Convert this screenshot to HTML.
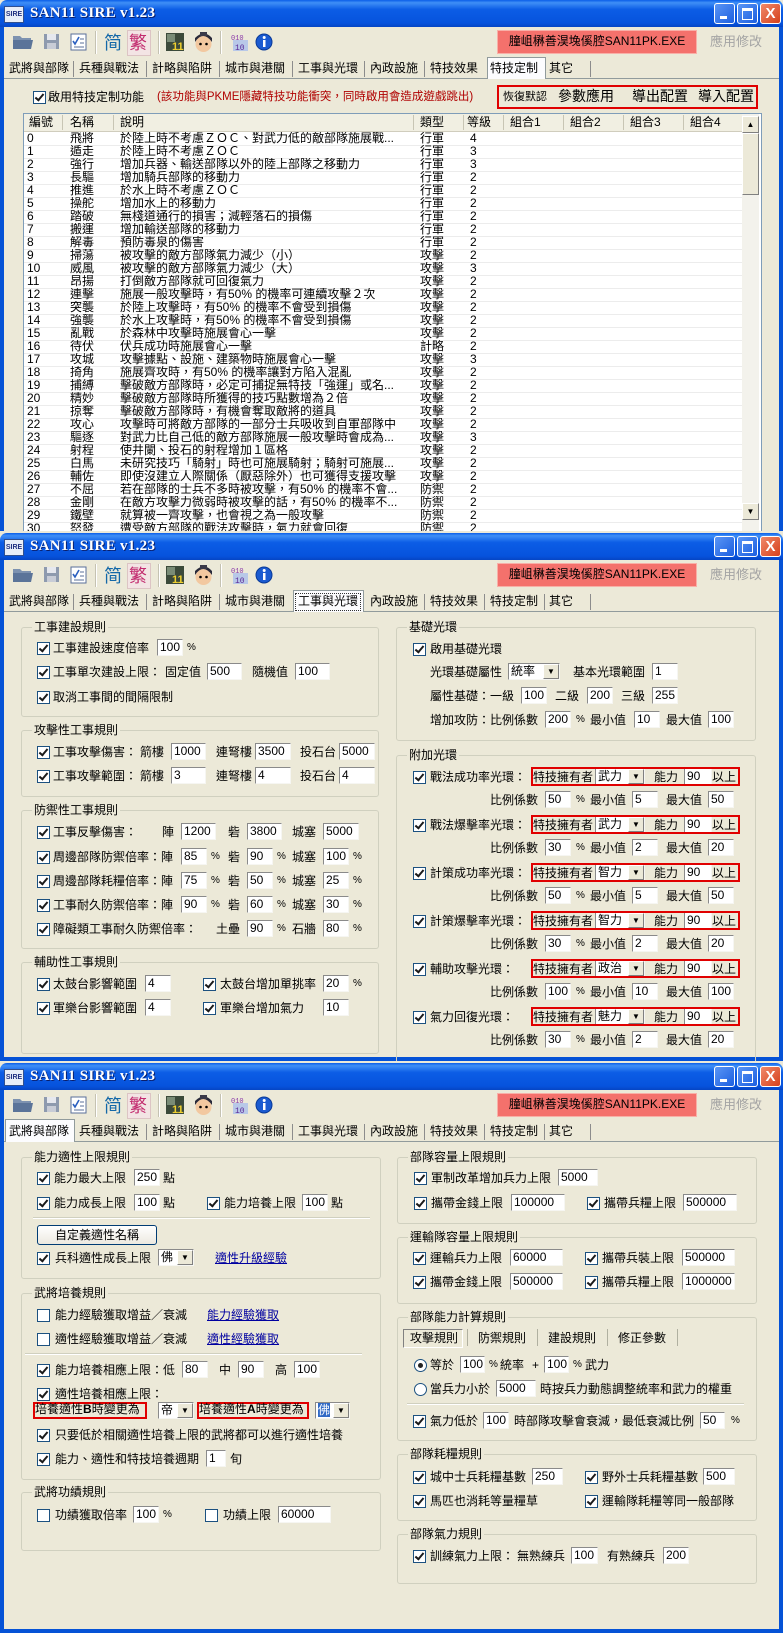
<!DOCTYPE html>
<html><head><meta charset="utf-8"><style>
body{margin:0;width:783px;height:1633px;position:relative;overflow:hidden;background:#ece9d8;font:12px "Liberation Sans","Noto Sans CJK TC",sans-serif;color:#000}
.a{position:absolute}
.w{position:absolute;left:0;width:783px;background:#ece9d8;overflow:hidden}
.t{position:absolute;white-space:nowrap;line-height:16px;height:16px}
.tb{position:absolute;left:0;top:0;width:783px;height:27px;border-radius:7px 7px 0 0;background:linear-gradient(#0a5ee8,#3f8ff6 10%,#0c5de6 35%,#0653dd 85%,#0545c4)}
.tt{position:absolute;left:30px;top:5px;color:#fff;font:bold 15px "Liberation Serif",serif;letter-spacing:0.3px;text-shadow:1px 1px #0a1e6a}
.ico{position:absolute;left:4px;top:6px;width:18px;height:15px;background:#e8eef8;border:1px solid #305090;font:bold 7px "Liberation Sans",sans-serif;color:#203080;line-height:15px;text-align:center}
.bt{position:absolute;top:3px;width:19px;height:19px;border:1px solid #fff;border-radius:3px;background:linear-gradient(135deg,#5a95f5,#1c5fe0)}
.sd{position:absolute;top:27px;width:4px;background:#0552d6}
.sep{position:absolute;top:31px;width:1px;height:23px;background:#c5c2b2;border-right:1px solid #fff}
.tab{position:absolute;top:60px;height:17px;line-height:17px;white-space:nowrap}
.ts{position:absolute;top:61px;width:1px;height:16px;background:#8c8c8c}
.cb{position:absolute;width:11px;height:11px;border:1px solid #1c5180;background:#fff}
.cb.on::after{content:"";position:absolute;left:3px;top:0;width:3px;height:7px;border:solid #1a1a1a;border-width:0 2px 2px 0;transform:rotate(40deg)}
.in{position:absolute;height:15px;background:#fff;border:1px solid;border-color:#8a8a8a #f6f6f2 #f6f6f2 #8a8a8a;line-height:15px;padding-left:2px;white-space:nowrap;overflow:hidden}
.sb{position:absolute;right:0;top:0;width:14px;height:13px;background:#ece9d8;border:1px solid;border-color:#fff #808080 #808080 #fff;font-size:8px;line-height:13px;text-align:center;font-style:normal}
.gb{position:absolute;border:1px solid #d0d0bf;border-radius:3px}
.gt{position:absolute;top:-9px;left:10px;background:#ece9d8;padding:0 2px;line-height:16px;white-space:nowrap}
.rb{position:absolute;border:2px solid #e00000}
.hr{position:absolute;height:1px;background:#d0d0bf;border-bottom:1px solid #fff}
.lk{color:#0000a0;text-decoration:underline}
.rd{position:absolute;width:11px;height:11px;border:1px solid #1c5180;border-radius:50%;background:#fff}
.row{position:absolute;left:24px;width:718px;height:13px;line-height:13px;border-bottom:1px solid #ececec;white-space:nowrap}
.row span{position:absolute;top:0;overflow:hidden}
</style></head><body>

<!-- ================= WINDOW 1 ================= -->
<div class="w" style="top:0;height:531px">
<div class="tb"><div class="ico">SIRE</div><div class="tt">SAN11 SIRE v1.23</div>
<div class="bt" style="left:714px"><div class="a" style="left:5px;top:12px;width:7px;height:3px;background:#fff"></div></div>
<div class="bt" style="left:737px"><div class="a" style="left:4px;top:4px;width:9px;height:8px;border:1px solid #fff;border-top-width:3px"></div></div>
<div class="bt" style="left:760px;background:linear-gradient(135deg,#f08a6a,#d5401c);color:#fff;font:bold 15px 'Liberation Sans';text-align:center;line-height:19px">X</div></div>
<div class="sd" style="left:0;height:504px"></div><div class="sd" style="left:779px;height:504px"></div>
<svg class="a" style="left:12px;top:33px" width="22" height="18"><path d="M1 3h7l2 2h9v11H1z" fill="#7d92b0"/><path d="M1 7h20l-2 9H1z" fill="#5b7499"/></svg>
<svg class="a" style="left:43px;top:33px" width="17" height="17"><rect x="1" y="1" width="15" height="15" fill="#8e9aae"/><rect x="4" y="1" width="9" height="6" fill="#e6e8ee"/><rect x="4" y="10" width="9" height="6" fill="#c8ccd6"/></svg>
<svg class="a" style="left:70px;top:33px" width="17" height="18"><rect x="1" y="1" width="15" height="16" fill="#fff" stroke="#5a6f9a"/><path d="M3 8l2 3 4-7" stroke="#2a5fc0" stroke-width="1.6" fill="none"/><path d="M10 6h4M10 10h4M4 14h10" stroke="#5a6f9a"/></svg>
<div class="sep" style="left:95px"></div>
<div class="t" style="left:104px;top:33px;font-size:18px;line-height:20px;height:20px;color:#1468a8">简</div>
<div class="a" style="left:127px;top:30px;width:22px;height:24px;background:#f3e4e4;border:1px solid #dcc4c4"></div>
<div class="t" style="left:129px;top:33px;font-size:18px;line-height:20px;height:20px;color:#c22a6e">繁</div>
<div class="sep" style="left:158px"></div>
<svg class="a" style="left:166px;top:33px" width="18" height="18"><rect width="18" height="18" fill="#3c4a3a"/><rect x="1" y="1" width="8" height="8" fill="#7a8c76"/><text x="6" y="17" font-size="11" font-weight="bold" fill="#f0d030" font-family="Liberation Sans">11</text></svg>
<svg class="a" style="left:193px;top:31px" width="21" height="22"><circle cx="10.5" cy="13" r="8" fill="#f2c8a0"/><path d="M2 11q8-12 17 0v-4q-8-9-17 0z" fill="#2a2a3a"/><rect x="7" y="1" width="7" height="4" fill="#3a3a4a"/><circle cx="7.5" cy="13" r="1.3"/><circle cx="13.5" cy="13" r="1.3"/></svg>
<div class="sep" style="left:220px"></div>
<svg class="a" style="left:230px;top:32px" width="19" height="20"><rect x="3" y="8" width="15" height="11" fill="#b8c8e8"/><text x="1" y="8" font-size="7" fill="#8a3aa8" font-family="Liberation Mono">010</text><text x="5" y="18" font-size="8" fill="#5a2a98" font-family="Liberation Mono">10</text></svg>
<svg class="a" style="left:255px;top:33px" width="18" height="18"><circle cx="9" cy="9" r="8" fill="#1a5ad0" stroke="#0a3a98"/><rect x="8" y="7" width="2.5" height="7" fill="#fff"/><circle cx="9.2" cy="4.5" r="1.5" fill="#fff"/></svg>
<div class="a" style="left:497px;top:30px;width:198px;height:22px;background:#f4716c;border:1px solid #f8b0a8"></div>
<div class="t" style="left:497px;top:33px;width:200px;text-align:center">膧岨楙善淏堍傒腔SAN11PK.EXE</div>
<div class="t" style="left:710px;top:34px;color:#a4a4a4;font-size:13px">應用修改</div>
<div class="a" style="left:4px;top:78px;width:775px;height:1px;background:#919b9c"></div>
<div class="a" style="left:487px;top:57px;width:57px;height:21px;background:#fcfcfe;border:1px solid #919b9c;border-bottom:none"></div>
<div class="tab" style="left:9px">武將與部隊</div><div class="ts" style="left:73px"></div>
<div class="tab" style="left:79px">兵種與戰法</div><div class="ts" style="left:146px"></div>
<div class="tab" style="left:152px">計略與陷阱</div><div class="ts" style="left:219px"></div>
<div class="tab" style="left:225px">城市與港關</div><div class="ts" style="left:292px"></div>
<div class="tab" style="left:298px">工事與光環</div><div class="ts" style="left:364px"></div>
<div class="tab" style="left:370px">內政設施</div><div class="ts" style="left:424px"></div>
<div class="tab" style="left:430px">特技效果</div>
<div class="tab" style="left:490px">特技定制</div>
<div class="tab" style="left:549px">其它</div><div class="ts" style="left:590px"></div>
<div class="cb on" style="left:33px;top:91px"></div>
<div class="t" style="left:48px;top:89px">啟用特技定制功能</div>
<div class="t" style="left:157px;top:89px;color:#b00000;font-size:11.5px">(該功能與PKME隱藏特技功能衝突，同時啟用會造成遊戲跳出)</div>
<div class="rb" style="left:497px;top:85px;width:257px;height:20px"></div>
<div class="t" style="left:503px;top:89px;font-size:11px">恢復默認</div>
<div class="t" style="left:558px;top:87px;font-size:14px;line-height:18px">參數應用</div>
<div class="t" style="left:632px;top:87px;font-size:14px;line-height:18px">導出配置</div>
<div class="t" style="left:698px;top:87px;font-size:14px;line-height:18px">導入配置</div>
<div class="a" style="left:23px;top:113px;width:737px;height:420px;background:#fff;border:1px solid #7f9db9"></div>
<div class="a" style="left:24px;top:114px;width:718px;height:17px;background:#f1efe2;border-bottom:1px solid #d0cdbd"></div>
<div class="t" style="left:29px;top:114px">編號</div><div class="a" style="left:62px;top:115px;width:1px;height:15px;background:#c8c5b4"></div>
<div class="t" style="left:70px;top:114px">名稱</div><div class="a" style="left:113px;top:115px;width:1px;height:15px;background:#c8c5b4"></div>
<div class="t" style="left:120px;top:114px">說明</div><div class="a" style="left:413px;top:115px;width:1px;height:15px;background:#c8c5b4"></div>
<div class="t" style="left:420px;top:114px">類型</div><div class="a" style="left:463px;top:115px;width:1px;height:15px;background:#c8c5b4"></div>
<div class="t" style="left:467px;top:114px">等級</div><div class="a" style="left:503px;top:115px;width:1px;height:15px;background:#c8c5b4"></div>
<div class="t" style="left:510px;top:114px">組合1</div><div class="a" style="left:563px;top:115px;width:1px;height:15px;background:#c8c5b4"></div>
<div class="t" style="left:570px;top:114px">組合2</div><div class="a" style="left:623px;top:115px;width:1px;height:15px;background:#c8c5b4"></div>
<div class="t" style="left:630px;top:114px">組合3</div><div class="a" style="left:683px;top:115px;width:1px;height:15px;background:#c8c5b4"></div>
<div class="t" style="left:690px;top:114px">組合4</div>
<div class="a" style="left:742px;top:114px;width:17px;height:420px;background:#f3f2ec"></div>
<div class="a" style="left:742px;top:116px;width:15px;height:15px;background:#ece9d8;border:1px solid #fff;border-right-color:#808080;border-bottom-color:#808080;font-size:8px;text-align:center;line-height:15px">▲</div>
<div class="a" style="left:742px;top:503px;width:15px;height:15px;background:#ece9d8;border:1px solid #fff;border-right-color:#808080;border-bottom-color:#808080;font-size:8px;text-align:center;line-height:15px">▼</div>
<div class="a" style="left:742px;top:133px;width:15px;height:60px;background:#ece9d8;border:1px solid #fff;border-right-color:#808080;border-bottom-color:#808080"></div>
<div class="a" style="left:24px;top:131px;width:718px;height:402px;overflow:hidden">
<div style="position:relative;left:-24px">
<div class="row" style="top:1px"><span style="left:3px">0</span><span style="left:46px">飛將</span><span style="left:96px;width:292px">於陸上時不考慮ＺＯＣ、對武力低的敵部隊施展戰...</span><span style="left:396px">行軍</span><span style="left:446px">4</span></div>
<div class="row" style="top:14px"><span style="left:3px">1</span><span style="left:46px">遁走</span><span style="left:96px">於陸上時不考慮ＺＯＣ</span><span style="left:396px">行軍</span><span style="left:446px">3</span></div>
<div class="row" style="top:27px"><span style="left:3px">2</span><span style="left:46px">強行</span><span style="left:96px">增加兵器、輸送部隊以外的陸上部隊之移動力</span><span style="left:396px">行軍</span><span style="left:446px">3</span></div>
<div class="row" style="top:40px"><span style="left:3px">3</span><span style="left:46px">長驅</span><span style="left:96px">增加騎兵部隊的移動力</span><span style="left:396px">行軍</span><span style="left:446px">2</span></div>
<div class="row" style="top:53px"><span style="left:3px">4</span><span style="left:46px">推進</span><span style="left:96px">於水上時不考慮ＺＯＣ</span><span style="left:396px">行軍</span><span style="left:446px">2</span></div>
<div class="row" style="top:66px"><span style="left:3px">5</span><span style="left:46px">操舵</span><span style="left:96px">增加水上的移動力</span><span style="left:396px">行軍</span><span style="left:446px">2</span></div>
<div class="row" style="top:79px"><span style="left:3px">6</span><span style="left:46px">踏破</span><span style="left:96px">無棧道通行的損害；減輕落石的損傷</span><span style="left:396px">行軍</span><span style="left:446px">2</span></div>
<div class="row" style="top:92px"><span style="left:3px">7</span><span style="left:46px">搬運</span><span style="left:96px">增加輸送部隊的移動力</span><span style="left:396px">行軍</span><span style="left:446px">2</span></div>
<div class="row" style="top:105px"><span style="left:3px">8</span><span style="left:46px">解毒</span><span style="left:96px">預防毒泉的傷害</span><span style="left:396px">行軍</span><span style="left:446px">2</span></div>
<div class="row" style="top:118px"><span style="left:3px">9</span><span style="left:46px">掃蕩</span><span style="left:96px">被攻擊的敵方部隊氣力減少（小）</span><span style="left:396px">攻擊</span><span style="left:446px">2</span></div>
<div class="row" style="top:131px"><span style="left:3px">10</span><span style="left:46px">威風</span><span style="left:96px">被攻擊的敵方部隊氣力減少（大）</span><span style="left:396px">攻擊</span><span style="left:446px">3</span></div>
<div class="row" style="top:144px"><span style="left:3px">11</span><span style="left:46px">昂揚</span><span style="left:96px">打倒敵方部隊就可回復氣力</span><span style="left:396px">攻擊</span><span style="left:446px">2</span></div>
<div class="row" style="top:157px"><span style="left:3px">12</span><span style="left:46px">連擊</span><span style="left:96px">施展一般攻擊時，有50% 的機率可連續攻擊２次</span><span style="left:396px">攻擊</span><span style="left:446px">2</span></div>
<div class="row" style="top:170px"><span style="left:3px">13</span><span style="left:46px">突襲</span><span style="left:96px">於陸上攻擊時，有50% 的機率不會受到損傷</span><span style="left:396px">攻擊</span><span style="left:446px">2</span></div>
<div class="row" style="top:183px"><span style="left:3px">14</span><span style="left:46px">強襲</span><span style="left:96px">於水上攻擊時，有50% 的機率不會受到損傷</span><span style="left:396px">攻擊</span><span style="left:446px">2</span></div>
<div class="row" style="top:196px"><span style="left:3px">15</span><span style="left:46px">亂戰</span><span style="left:96px">於森林中攻擊時施展會心一擊</span><span style="left:396px">攻擊</span><span style="left:446px">2</span></div>
<div class="row" style="top:209px"><span style="left:3px">16</span><span style="left:46px">待伏</span><span style="left:96px">伏兵成功時施展會心一擊</span><span style="left:396px">計略</span><span style="left:446px">2</span></div>
<div class="row" style="top:222px"><span style="left:3px">17</span><span style="left:46px">攻城</span><span style="left:96px">攻擊據點、設施、建築物時施展會心一擊</span><span style="left:396px">攻擊</span><span style="left:446px">3</span></div>
<div class="row" style="top:235px"><span style="left:3px">18</span><span style="left:46px">掎角</span><span style="left:96px">施展齊攻時，有50% 的機率讓對方陷入混亂</span><span style="left:396px">攻擊</span><span style="left:446px">2</span></div>
<div class="row" style="top:248px"><span style="left:3px">19</span><span style="left:46px">捕縛</span><span style="left:96px;width:292px">擊破敵方部隊時，必定可捕捉無特技「強運」或名...</span><span style="left:396px">攻擊</span><span style="left:446px">2</span></div>
<div class="row" style="top:261px"><span style="left:3px">20</span><span style="left:46px">精妙</span><span style="left:96px">擊破敵方部隊時所獲得的技巧點數增為２倍</span><span style="left:396px">攻擊</span><span style="left:446px">2</span></div>
<div class="row" style="top:274px"><span style="left:3px">21</span><span style="left:46px">掠奪</span><span style="left:96px">擊破敵方部隊時，有機會奪取敵將的道具</span><span style="left:396px">攻擊</span><span style="left:446px">2</span></div>
<div class="row" style="top:287px"><span style="left:3px">22</span><span style="left:46px">攻心</span><span style="left:96px">攻擊時可將敵方部隊的一部分士兵吸收到自軍部隊中</span><span style="left:396px">攻擊</span><span style="left:446px">2</span></div>
<div class="row" style="top:300px"><span style="left:3px">23</span><span style="left:46px">驅逐</span><span style="left:96px;width:292px">對武力比自己低的敵方部隊施展一般攻擊時會成為...</span><span style="left:396px">攻擊</span><span style="left:446px">3</span></div>
<div class="row" style="top:313px"><span style="left:3px">24</span><span style="left:46px">射程</span><span style="left:96px">使井闌、投石的射程增加１區格</span><span style="left:396px">攻擊</span><span style="left:446px">2</span></div>
<div class="row" style="top:326px"><span style="left:3px">25</span><span style="left:46px">白馬</span><span style="left:96px;width:292px">未研究技巧「騎射」時也可施展騎射；騎射可施展...</span><span style="left:396px">攻擊</span><span style="left:446px">2</span></div>
<div class="row" style="top:339px"><span style="left:3px">26</span><span style="left:46px">輔佐</span><span style="left:96px">即使沒建立人際關係（厭惡除外）也可獲得支援攻擊</span><span style="left:396px">攻擊</span><span style="left:446px">2</span></div>
<div class="row" style="top:352px"><span style="left:3px">27</span><span style="left:46px">不屈</span><span style="left:96px;width:292px">若在部隊的士兵不多時被攻擊，有50% 的機率不會...</span><span style="left:396px">防禦</span><span style="left:446px">2</span></div>
<div class="row" style="top:365px"><span style="left:3px">28</span><span style="left:46px">金剛</span><span style="left:96px;width:292px">在敵方攻擊力微弱時被攻擊的話，有50% 的機率不...</span><span style="left:396px">防禦</span><span style="left:446px">2</span></div>
<div class="row" style="top:378px"><span style="left:3px">29</span><span style="left:46px">鐵壁</span><span style="left:96px">就算被一齊攻擊，也會視之為一般攻擊</span><span style="left:396px">防禦</span><span style="left:446px">2</span></div>
<div class="row" style="top:391px"><span style="left:3px">30</span><span style="left:46px">怒發</span><span style="left:96px">遭受敵方部隊的戰法攻擊時，氣力就會回復</span><span style="left:396px">防禦</span><span style="left:446px">2</span></div>
</div></div>
</div>

<!-- ================= WINDOW 2 ================= -->
<div class="w" style="top:533px;height:528px">
<div class="tb"><div class="ico">SIRE</div><div class="tt">SAN11 SIRE v1.23</div>
<div class="bt" style="left:714px"><div class="a" style="left:5px;top:12px;width:7px;height:3px;background:#fff"></div></div>
<div class="bt" style="left:737px"><div class="a" style="left:4px;top:4px;width:9px;height:8px;border:1px solid #fff;border-top-width:3px"></div></div>
<div class="bt" style="left:760px;background:linear-gradient(135deg,#f08a6a,#d5401c);color:#fff;font:bold 15px 'Liberation Sans';text-align:center;line-height:19px">X</div></div>
<div class="sd" style="left:0;height:501px"></div><div class="sd" style="left:779px;height:501px"></div>
<div class="a" style="left:0;top:524px;width:783px;height:4px;background:#0552d6"></div>
<svg class="a" style="left:12px;top:33px" width="22" height="18"><path d="M1 3h7l2 2h9v11H1z" fill="#7d92b0"/><path d="M1 7h20l-2 9H1z" fill="#5b7499"/></svg>
<svg class="a" style="left:43px;top:33px" width="17" height="17"><rect x="1" y="1" width="15" height="15" fill="#8e9aae"/><rect x="4" y="1" width="9" height="6" fill="#e6e8ee"/><rect x="4" y="10" width="9" height="6" fill="#c8ccd6"/></svg>
<svg class="a" style="left:70px;top:33px" width="17" height="18"><rect x="1" y="1" width="15" height="16" fill="#fff" stroke="#5a6f9a"/><path d="M3 8l2 3 4-7" stroke="#2a5fc0" stroke-width="1.6" fill="none"/><path d="M10 6h4M10 10h4M4 14h10" stroke="#5a6f9a"/></svg>
<div class="sep" style="left:95px"></div>
<div class="t" style="left:104px;top:33px;font-size:18px;line-height:20px;height:20px;color:#1468a8">简</div>
<div class="a" style="left:127px;top:30px;width:22px;height:24px;background:#f3e4e4;border:1px solid #dcc4c4"></div>
<div class="t" style="left:129px;top:33px;font-size:18px;line-height:20px;height:20px;color:#c22a6e">繁</div>
<div class="sep" style="left:158px"></div>
<svg class="a" style="left:166px;top:33px" width="18" height="18"><rect width="18" height="18" fill="#3c4a3a"/><rect x="1" y="1" width="8" height="8" fill="#7a8c76"/><text x="6" y="17" font-size="11" font-weight="bold" fill="#f0d030" font-family="Liberation Sans">11</text></svg>
<svg class="a" style="left:193px;top:31px" width="21" height="22"><circle cx="10.5" cy="13" r="8" fill="#f2c8a0"/><path d="M2 11q8-12 17 0v-4q-8-9-17 0z" fill="#2a2a3a"/><rect x="7" y="1" width="7" height="4" fill="#3a3a4a"/><circle cx="7.5" cy="13" r="1.3"/><circle cx="13.5" cy="13" r="1.3"/></svg>
<div class="sep" style="left:220px"></div>
<svg class="a" style="left:230px;top:32px" width="19" height="20"><rect x="3" y="8" width="15" height="11" fill="#b8c8e8"/><text x="1" y="8" font-size="7" fill="#8a3aa8" font-family="Liberation Mono">010</text><text x="5" y="18" font-size="8" fill="#5a2a98" font-family="Liberation Mono">10</text></svg>
<svg class="a" style="left:255px;top:33px" width="18" height="18"><circle cx="9" cy="9" r="8" fill="#1a5ad0" stroke="#0a3a98"/><rect x="8" y="7" width="2.5" height="7" fill="#fff"/><circle cx="9.2" cy="4.5" r="1.5" fill="#fff"/></svg>
<div class="a" style="left:497px;top:30px;width:198px;height:22px;background:#f4716c;border:1px solid #f8b0a8"></div>
<div class="t" style="left:497px;top:33px;width:200px;text-align:center">膧岨楙善淏堍傒腔SAN11PK.EXE</div>
<div class="t" style="left:710px;top:34px;color:#a4a4a4;font-size:13px">應用修改</div>
<div class="a" style="left:4px;top:78px;width:775px;height:1px;background:#919b9c"></div>
<div class="a" style="left:293px;top:57px;width:69px;height:21px;background:#fcfcfe;border:1px solid #919b9c;border-bottom:none"></div>
<div class="a" style="left:295px;top:60px;width:64px;height:16px;border:1px dotted #333"></div>
<div class="tab" style="left:9px">武將與部隊</div><div class="ts" style="left:73px"></div>
<div class="tab" style="left:79px">兵種與戰法</div><div class="ts" style="left:146px"></div>
<div class="tab" style="left:152px">計略與陷阱</div><div class="ts" style="left:219px"></div>
<div class="tab" style="left:225px">城市與港關</div>
<div class="tab" style="left:298px">工事與光環</div>
<div class="tab" style="left:370px">內政設施</div><div class="ts" style="left:424px"></div>
<div class="tab" style="left:430px">特技效果</div><div class="ts" style="left:484px"></div>
<div class="tab" style="left:490px">特技定制</div><div class="ts" style="left:544px"></div>
<div class="tab" style="left:549px">其它</div><div class="ts" style="left:590px"></div>

<div class="gb" style="left:21px;top:94px;width:356px;height:88px"><div class="gt">工事建設規則</div></div>
<div class="cb on" style="left:37px;top:109px"></div><div class="t" style="left:53px;top:107px">工事建設速度倍率</div><div class="in" style="left:157px;top:106px;width:22px">100</div><div class="t" style="left:187px;top:107px;font-size:10px">%</div>
<div class="cb on" style="left:37px;top:133px"></div><div class="t" style="left:53px;top:131px">工事單次建設上限：</div><div class="t" style="left:165px;top:131px">固定值</div><div class="in" style="left:207px;top:130px;width:31px">500</div><div class="t" style="left:252px;top:131px">隨機值</div><div class="in" style="left:295px;top:130px;width:31px">100</div>
<div class="cb on" style="left:37px;top:158px"></div><div class="t" style="left:53px;top:156px">取消工事間的間隔限制</div>

<div class="gb" style="left:21px;top:197px;width:356px;height:65px"><div class="gt">攻擊性工事規則</div></div>
<div class="cb on" style="left:37px;top:213px"></div><div class="t" style="left:53px;top:211px">工事攻擊傷害：</div><div class="t" style="left:140px;top:211px">箭樓</div><div class="in" style="left:171px;top:210px;width:31px">1000</div><div class="t" style="left:216px;top:211px">連弩樓</div><div class="in" style="left:255px;top:210px;width:32px">3500</div><div class="t" style="left:300px;top:211px">投石台</div><div class="in" style="left:339px;top:210px;width:32px">5000</div>
<div class="cb on" style="left:37px;top:237px"></div><div class="t" style="left:53px;top:235px">工事攻擊範圍：</div><div class="t" style="left:140px;top:235px">箭樓</div><div class="in" style="left:171px;top:234px;width:31px">3</div><div class="t" style="left:216px;top:235px">連弩樓</div><div class="in" style="left:255px;top:234px;width:32px">4</div><div class="t" style="left:300px;top:235px">投石台</div><div class="in" style="left:339px;top:234px;width:32px">4</div>

<div class="gb" style="left:21px;top:277px;width:356px;height:137px"><div class="gt">防禦性工事規則</div></div>
<div class="cb on" style="left:37px;top:293px"></div><div class="t" style="left:53px;top:291px">工事反擊傷害：</div><div class="t" style="left:162px;top:291px">陣</div><div class="in" style="left:181px;top:290px;width:31px">1200</div><div class="t" style="left:228px;top:291px">砦</div><div class="in" style="left:247px;top:290px;width:31px">3800</div><div class="t" style="left:292px;top:291px">城塞</div><div class="in" style="left:323px;top:290px;width:32px">5000</div>
<div class="cb on" style="left:37px;top:318px"></div><div class="t" style="left:53px;top:316px">周邊部隊防禦倍率：陣</div><div class="in" style="left:181px;top:315px;width:22px">85</div><div class="t" style="left:211px;top:316px;font-size:10px">%</div><div class="t" style="left:228px;top:316px">砦</div><div class="in" style="left:247px;top:315px;width:22px">90</div><div class="t" style="left:277px;top:316px;font-size:10px">%</div><div class="t" style="left:292px;top:316px">城塞</div><div class="in" style="left:323px;top:315px;width:22px">100</div><div class="t" style="left:353px;top:316px;font-size:10px">%</div>
<div class="cb on" style="left:37px;top:342px"></div><div class="t" style="left:53px;top:340px">周邊部隊耗糧倍率：陣</div><div class="in" style="left:181px;top:339px;width:22px">75</div><div class="t" style="left:211px;top:340px;font-size:10px">%</div><div class="t" style="left:228px;top:340px">砦</div><div class="in" style="left:247px;top:339px;width:22px">50</div><div class="t" style="left:277px;top:340px;font-size:10px">%</div><div class="t" style="left:292px;top:340px">城塞</div><div class="in" style="left:323px;top:339px;width:22px">25</div><div class="t" style="left:353px;top:340px;font-size:10px">%</div>
<div class="cb on" style="left:37px;top:366px"></div><div class="t" style="left:53px;top:364px">工事耐久防禦倍率：陣</div><div class="in" style="left:181px;top:363px;width:22px">90</div><div class="t" style="left:211px;top:364px;font-size:10px">%</div><div class="t" style="left:228px;top:364px">砦</div><div class="in" style="left:247px;top:363px;width:22px">60</div><div class="t" style="left:277px;top:364px;font-size:10px">%</div><div class="t" style="left:292px;top:364px">城塞</div><div class="in" style="left:323px;top:363px;width:22px">30</div><div class="t" style="left:353px;top:364px;font-size:10px">%</div>
<div class="cb on" style="left:37px;top:390px"></div><div class="t" style="left:53px;top:388px">障礙類工事耐久防禦倍率：</div><div class="t" style="left:216px;top:388px">土壘</div><div class="in" style="left:247px;top:387px;width:22px">90</div><div class="t" style="left:277px;top:388px;font-size:10px">%</div><div class="t" style="left:292px;top:388px">石牆</div><div class="in" style="left:323px;top:387px;width:22px">80</div><div class="t" style="left:353px;top:388px;font-size:10px">%</div>

<div class="gb" style="left:21px;top:429px;width:356px;height:90px"><div class="gt">輔助性工事規則</div></div>
<div class="cb on" style="left:37px;top:445px"></div><div class="t" style="left:53px;top:443px">太鼓台影響範圍</div><div class="in" style="left:145px;top:442px;width:22px">4</div>
<div class="cb on" style="left:203px;top:445px"></div><div class="t" style="left:220px;top:443px">太鼓台增加單挑率</div><div class="in" style="left:323px;top:442px;width:22px">20</div><div class="t" style="left:353px;top:443px;font-size:10px">%</div>
<div class="cb on" style="left:37px;top:469px"></div><div class="t" style="left:53px;top:467px">軍樂台影響範圍</div><div class="in" style="left:145px;top:466px;width:22px">4</div>
<div class="cb on" style="left:203px;top:469px"></div><div class="t" style="left:220px;top:467px">軍樂台增加氣力</div><div class="in" style="left:323px;top:466px;width:22px">10</div>

<div class="gb" style="left:396px;top:94px;width:358px;height:112px"><div class="gt">基礎光環</div></div>
<div class="cb on" style="left:413px;top:110px"></div><div class="t" style="left:430px;top:108px">啟用基礎光環</div>
<div class="t" style="left:430px;top:131px">光環基礎屬性</div><div class="in" style="left:508px;top:130px;width:48px">統率<i class="sb">▼</i></div><div class="t" style="left:573px;top:131px">基本光環範圍</div><div class="in" style="left:652px;top:130px;width:22px">1</div>
<div class="t" style="left:430px;top:155px">屬性基礎：一級</div><div class="in" style="left:521px;top:154px;width:22px">100</div><div class="t" style="left:555px;top:155px">二級</div><div class="in" style="left:587px;top:154px;width:22px">200</div><div class="t" style="left:621px;top:155px">三級</div><div class="in" style="left:652px;top:154px;width:22px">255</div>
<div class="t" style="left:430px;top:179px">增加攻防：比例係數</div><div class="in" style="left:545px;top:178px;width:22px">200</div><div class="t" style="left:576px;top:179px;font-size:10px">%</div><div class="t" style="left:590px;top:179px">最小值</div><div class="in" style="left:634px;top:178px;width:22px">10</div><div class="t" style="left:666px;top:179px">最大值</div><div class="in" style="left:708px;top:178px;width:22px">100</div>

<div class="gb" style="left:396px;top:222px;width:358px;height:310px"><div class="gt">附加光環</div></div>
<div class="cb on" style="left:413px;top:238px"></div><div class="t" style="left:430px;top:236px">戰法成功率光環：</div>
<div class="t" style="left:533px;top:236px">特技擁有者</div><div class="in" style="left:595px;top:235px;width:46px">武力<i class="sb">▼</i></div><div class="t" style="left:654px;top:236px">能力</div><div class="in" style="left:684px;top:235px;width:24px">90</div><div class="t" style="left:712px;top:236px">以上</div><div class="rb" style="left:531px;top:234px;width:205px;height:15px"></div>
<div class="t" style="left:490px;top:259px">比例係數</div><div class="in" style="left:545px;top:258px;width:22px">50</div><div class="t" style="left:576px;top:259px;font-size:10px">%</div><div class="t" style="left:590px;top:259px">最小值</div><div class="in" style="left:632px;top:258px;width:22px">5</div><div class="t" style="left:666px;top:259px">最大值</div><div class="in" style="left:708px;top:258px;width:22px">50</div>

<div class="cb on" style="left:413px;top:286px"></div><div class="t" style="left:430px;top:284px">戰法爆擊率光環：</div>
<div class="t" style="left:533px;top:284px">特技擁有者</div><div class="in" style="left:595px;top:283px;width:46px">武力<i class="sb">▼</i></div><div class="t" style="left:654px;top:284px">能力</div><div class="in" style="left:684px;top:283px;width:24px">90</div><div class="t" style="left:712px;top:284px">以上</div><div class="rb" style="left:531px;top:282px;width:205px;height:15px"></div>
<div class="t" style="left:490px;top:307px">比例係數</div><div class="in" style="left:545px;top:306px;width:22px">30</div><div class="t" style="left:576px;top:307px;font-size:10px">%</div><div class="t" style="left:590px;top:307px">最小值</div><div class="in" style="left:632px;top:306px;width:22px">2</div><div class="t" style="left:666px;top:307px">最大值</div><div class="in" style="left:708px;top:306px;width:22px">20</div>

<div class="cb on" style="left:413px;top:334px"></div><div class="t" style="left:430px;top:332px">計策成功率光環：</div>
<div class="t" style="left:533px;top:332px">特技擁有者</div><div class="in" style="left:595px;top:331px;width:46px">智力<i class="sb">▼</i></div><div class="t" style="left:654px;top:332px">能力</div><div class="in" style="left:684px;top:331px;width:24px">90</div><div class="t" style="left:712px;top:332px">以上</div><div class="rb" style="left:531px;top:330px;width:205px;height:15px"></div>
<div class="t" style="left:490px;top:355px">比例係數</div><div class="in" style="left:545px;top:354px;width:22px">50</div><div class="t" style="left:576px;top:355px;font-size:10px">%</div><div class="t" style="left:590px;top:355px">最小值</div><div class="in" style="left:632px;top:354px;width:22px">5</div><div class="t" style="left:666px;top:355px">最大值</div><div class="in" style="left:708px;top:354px;width:22px">50</div>

<div class="cb on" style="left:413px;top:382px"></div><div class="t" style="left:430px;top:380px">計策爆擊率光環：</div>
<div class="t" style="left:533px;top:380px">特技擁有者</div><div class="in" style="left:595px;top:379px;width:46px">智力<i class="sb">▼</i></div><div class="t" style="left:654px;top:380px">能力</div><div class="in" style="left:684px;top:379px;width:24px">90</div><div class="t" style="left:712px;top:380px">以上</div><div class="rb" style="left:531px;top:378px;width:205px;height:15px"></div>
<div class="t" style="left:490px;top:403px">比例係數</div><div class="in" style="left:545px;top:402px;width:22px">30</div><div class="t" style="left:576px;top:403px;font-size:10px">%</div><div class="t" style="left:590px;top:403px">最小值</div><div class="in" style="left:632px;top:402px;width:22px">2</div><div class="t" style="left:666px;top:403px">最大值</div><div class="in" style="left:708px;top:402px;width:22px">20</div>

<div class="cb on" style="left:413px;top:430px"></div><div class="t" style="left:430px;top:428px">輔助攻擊光環：</div>
<div class="t" style="left:533px;top:428px">特技擁有者</div><div class="in" style="left:595px;top:427px;width:46px">政治<i class="sb">▼</i></div><div class="t" style="left:654px;top:428px">能力</div><div class="in" style="left:684px;top:427px;width:24px">90</div><div class="t" style="left:712px;top:428px">以上</div><div class="rb" style="left:531px;top:426px;width:205px;height:15px"></div>
<div class="t" style="left:490px;top:451px">比例係數</div><div class="in" style="left:545px;top:450px;width:22px">100</div><div class="t" style="left:576px;top:451px;font-size:10px">%</div><div class="t" style="left:590px;top:451px">最小值</div><div class="in" style="left:632px;top:450px;width:22px">10</div><div class="t" style="left:666px;top:451px">最大值</div><div class="in" style="left:708px;top:450px;width:22px">100</div>

<div class="cb on" style="left:413px;top:478px"></div><div class="t" style="left:430px;top:476px">氣力回復光環：</div>
<div class="t" style="left:533px;top:476px">特技擁有者</div><div class="in" style="left:595px;top:475px;width:46px">魅力<i class="sb">▼</i></div><div class="t" style="left:654px;top:476px">能力</div><div class="in" style="left:684px;top:475px;width:24px">90</div><div class="t" style="left:712px;top:476px">以上</div><div class="rb" style="left:531px;top:474px;width:205px;height:15px"></div>
<div class="t" style="left:490px;top:499px">比例係數</div><div class="in" style="left:545px;top:498px;width:22px">30</div><div class="t" style="left:576px;top:499px;font-size:10px">%</div><div class="t" style="left:590px;top:499px">最小值</div><div class="in" style="left:632px;top:498px;width:22px">2</div><div class="t" style="left:666px;top:499px">最大值</div><div class="in" style="left:708px;top:498px;width:22px">20</div>
</div>

<!-- ================= WINDOW 3 ================= -->
<div class="w" style="top:1063px;height:570px">
<div class="tb"><div class="ico">SIRE</div><div class="tt">SAN11 SIRE v1.23</div>
<div class="bt" style="left:714px"><div class="a" style="left:5px;top:12px;width:7px;height:3px;background:#fff"></div></div>
<div class="bt" style="left:737px"><div class="a" style="left:4px;top:4px;width:9px;height:8px;border:1px solid #fff;border-top-width:3px"></div></div>
<div class="bt" style="left:760px;background:linear-gradient(135deg,#f08a6a,#d5401c);color:#fff;font:bold 15px 'Liberation Sans';text-align:center;line-height:19px">X</div></div>
<div class="sd" style="left:0;height:543px"></div><div class="sd" style="left:779px;height:543px"></div>
<div class="a" style="left:0;top:566px;width:783px;height:4px;background:#0552d6"></div>
<svg class="a" style="left:12px;top:33px" width="22" height="18"><path d="M1 3h7l2 2h9v11H1z" fill="#7d92b0"/><path d="M1 7h20l-2 9H1z" fill="#5b7499"/></svg>
<svg class="a" style="left:43px;top:33px" width="17" height="17"><rect x="1" y="1" width="15" height="15" fill="#8e9aae"/><rect x="4" y="1" width="9" height="6" fill="#e6e8ee"/><rect x="4" y="10" width="9" height="6" fill="#c8ccd6"/></svg>
<svg class="a" style="left:70px;top:33px" width="17" height="18"><rect x="1" y="1" width="15" height="16" fill="#fff" stroke="#5a6f9a"/><path d="M3 8l2 3 4-7" stroke="#2a5fc0" stroke-width="1.6" fill="none"/><path d="M10 6h4M10 10h4M4 14h10" stroke="#5a6f9a"/></svg>
<div class="sep" style="left:95px"></div>
<div class="t" style="left:104px;top:33px;font-size:18px;line-height:20px;height:20px;color:#1468a8">简</div>
<div class="a" style="left:127px;top:30px;width:22px;height:24px;background:#f3e4e4;border:1px solid #dcc4c4"></div>
<div class="t" style="left:129px;top:33px;font-size:18px;line-height:20px;height:20px;color:#c22a6e">繁</div>
<div class="sep" style="left:158px"></div>
<svg class="a" style="left:166px;top:33px" width="18" height="18"><rect width="18" height="18" fill="#3c4a3a"/><rect x="1" y="1" width="8" height="8" fill="#7a8c76"/><text x="6" y="17" font-size="11" font-weight="bold" fill="#f0d030" font-family="Liberation Sans">11</text></svg>
<svg class="a" style="left:193px;top:31px" width="21" height="22"><circle cx="10.5" cy="13" r="8" fill="#f2c8a0"/><path d="M2 11q8-12 17 0v-4q-8-9-17 0z" fill="#2a2a3a"/><rect x="7" y="1" width="7" height="4" fill="#3a3a4a"/><circle cx="7.5" cy="13" r="1.3"/><circle cx="13.5" cy="13" r="1.3"/></svg>
<div class="sep" style="left:220px"></div>
<svg class="a" style="left:230px;top:32px" width="19" height="20"><rect x="3" y="8" width="15" height="11" fill="#b8c8e8"/><text x="1" y="8" font-size="7" fill="#8a3aa8" font-family="Liberation Mono">010</text><text x="5" y="18" font-size="8" fill="#5a2a98" font-family="Liberation Mono">10</text></svg>
<svg class="a" style="left:255px;top:33px" width="18" height="18"><circle cx="9" cy="9" r="8" fill="#1a5ad0" stroke="#0a3a98"/><rect x="8" y="7" width="2.5" height="7" fill="#fff"/><circle cx="9.2" cy="4.5" r="1.5" fill="#fff"/></svg>
<div class="a" style="left:497px;top:30px;width:198px;height:22px;background:#f4716c;border:1px solid #f8b0a8"></div>
<div class="t" style="left:497px;top:33px;width:200px;text-align:center">膧岨楙善淏堍傒腔SAN11PK.EXE</div>
<div class="t" style="left:710px;top:34px;color:#a4a4a4;font-size:13px">應用修改</div>
<div class="a" style="left:4px;top:78px;width:775px;height:1px;background:#919b9c"></div>
<div class="a" style="left:5px;top:56px;width:68px;height:22px;background:#fcfcfe;border:1px solid #919b9c;border-bottom:none"></div>
<div class="tab" style="left:9px">武將與部隊</div>
<div class="tab" style="left:79px">兵種與戰法</div><div class="ts" style="left:146px"></div>
<div class="tab" style="left:152px">計略與陷阱</div><div class="ts" style="left:219px"></div>
<div class="tab" style="left:225px">城市與港關</div><div class="ts" style="left:292px"></div>
<div class="tab" style="left:298px">工事與光環</div><div class="ts" style="left:364px"></div>
<div class="tab" style="left:370px">內政設施</div><div class="ts" style="left:424px"></div>
<div class="tab" style="left:430px">特技效果</div><div class="ts" style="left:484px"></div>
<div class="tab" style="left:490px">特技定制</div><div class="ts" style="left:544px"></div>
<div class="tab" style="left:549px">其它</div><div class="ts" style="left:590px"></div>

<div class="gb" style="left:21px;top:94px;width:358px;height:120px"><div class="gt">能力適性上限規則</div></div>
<div class="cb on" style="left:37px;top:109px"></div><div class="t" style="left:54px;top:107px">能力最大上限</div><div class="in" style="left:134px;top:106px;width:22px">250</div><div class="t" style="left:163px;top:107px">點</div>
<div class="cb on" style="left:37px;top:134px"></div><div class="t" style="left:54px;top:132px">能力成長上限</div><div class="in" style="left:134px;top:131px;width:22px">100</div><div class="t" style="left:163px;top:132px">點</div>
<div class="cb on" style="left:207px;top:134px"></div><div class="t" style="left:224px;top:132px">能力培養上限</div><div class="in" style="left:302px;top:131px;width:22px">100</div><div class="t" style="left:331px;top:132px">點</div>
<div class="hr" style="left:33px;top:154px;width:337px"></div>
<div class="a" style="left:37px;top:162px;width:118px;height:18px;background:linear-gradient(#fff,#ece9e0);border:1px solid #003c74;border-radius:3px;text-align:center;line-height:18px">自定義適性名稱</div>
<div class="cb on" style="left:37px;top:189px"></div><div class="t" style="left:55px;top:187px">兵科適性成長上限</div><div class="in" style="left:158px;top:186px;width:32px">佛<i class="sb">▼</i></div><div class="t lk" style="left:215px;top:187px">適性升級經驗</div>

<div class="gb" style="left:21px;top:230px;width:358px;height:185px"><div class="gt">武將培養規則</div></div>
<div class="cb" style="left:37px;top:246px"></div><div class="t" style="left:55px;top:244px">能力經驗獲取增益／衰減</div><div class="t lk" style="left:207px;top:244px">能力經驗獲取</div>
<div class="cb" style="left:37px;top:270px"></div><div class="t" style="left:55px;top:268px">適性經驗獲取增益／衰減</div><div class="t lk" style="left:207px;top:268px">適性經驗獲取</div>
<div class="hr" style="left:25px;top:290px;width:337px"></div>
<div class="cb on" style="left:37px;top:301px"></div><div class="t" style="left:55px;top:299px">能力培養相應上限：低</div><div class="in" style="left:182px;top:298px;width:22px">80</div><div class="t" style="left:219px;top:299px">中</div><div class="in" style="left:238px;top:298px;width:22px">90</div><div class="t" style="left:275px;top:299px">高</div><div class="in" style="left:294px;top:298px;width:22px">100</div>
<div class="cb on" style="left:37px;top:325px"></div><div class="t" style="left:55px;top:323px">適性培養相應上限：</div>
<div class="rb" style="left:33px;top:339px;width:110px;height:13px"></div><div class="t" style="left:35px;top:338px">培養適性<b>B</b>時變更為</div>
<div class="in" style="left:158px;top:339px;width:32px">帝<i class="sb">▼</i></div>
<div class="rb" style="left:197px;top:339px;width:108px;height:13px"></div><div class="t" style="left:199px;top:338px">培養適性<b>A</b>時變更為</div>
<div class="in" style="left:315px;top:339px;width:31px"><span style="background:#316ac5;color:#fff">佛</span><i class="sb">▼</i></div>
<div class="cb on" style="left:37px;top:366px"></div><div class="t" style="left:55px;top:364px">只要低於相關適性培養上限的武將都可以進行適性培養</div>
<div class="cb on" style="left:37px;top:390px"></div><div class="t" style="left:55px;top:388px">能力、適性和特技培養週期</div><div class="in" style="left:206px;top:387px;width:16px">1</div><div class="t" style="left:230px;top:388px">旬</div>

<div class="gb" style="left:21px;top:429px;width:358px;height:57px"><div class="gt">武將功績規則</div></div>
<div class="cb" style="left:37px;top:446px"></div><div class="t" style="left:55px;top:444px">功績獲取倍率</div><div class="in" style="left:133px;top:443px;width:22px">100</div><div class="t" style="left:163px;top:444px;font-size:10px">%</div>
<div class="cb" style="left:205px;top:446px"></div><div class="t" style="left:223px;top:444px">功績上限</div><div class="in" style="left:278px;top:443px;width:49px">60000</div>

<div class="gb" style="left:397px;top:94px;width:358px;height:65px"><div class="gt">部隊容量上限規則</div></div>
<div class="cb on" style="left:414px;top:109px"></div><div class="t" style="left:431px;top:107px">軍制改革增加兵力上限</div><div class="in" style="left:558px;top:106px;width:36px">5000</div>
<div class="cb on" style="left:414px;top:134px"></div><div class="t" style="left:431px;top:132px">攜帶金錢上限</div><div class="in" style="left:511px;top:131px;width:50px">100000</div>
<div class="cb on" style="left:587px;top:134px"></div><div class="t" style="left:604px;top:132px">攜帶兵糧上限</div><div class="in" style="left:683px;top:131px;width:50px">500000</div>

<div class="gb" style="left:397px;top:174px;width:358px;height:65px"><div class="gt">運輸隊容量上限規則</div></div>
<div class="cb on" style="left:413px;top:189px"></div><div class="t" style="left:430px;top:187px">運輸兵力上限</div><div class="in" style="left:510px;top:186px;width:49px">60000</div>
<div class="cb on" style="left:585px;top:189px"></div><div class="t" style="left:602px;top:187px">攜帶兵裝上限</div><div class="in" style="left:682px;top:186px;width:49px">500000</div>
<div class="cb on" style="left:413px;top:213px"></div><div class="t" style="left:430px;top:211px">攜帶金錢上限</div><div class="in" style="left:510px;top:210px;width:49px">500000</div>
<div class="cb on" style="left:585px;top:213px"></div><div class="t" style="left:602px;top:211px">攜帶兵糧上限</div><div class="in" style="left:682px;top:210px;width:49px">1000000</div>

<div class="gb" style="left:397px;top:254px;width:358px;height:122px"><div class="gt">部隊能力計算規則</div></div>
<div class="a" style="left:403px;top:266px;width:58px;height:17px;border:1px solid;border-color:#808080 #fff #fff #808080"></div>
<div class="t" style="left:410px;top:267px">攻擊規則</div><div class="a" style="left:467px;top:266px;width:1px;height:17px;background:#b0b0a0"></div>
<div class="t" style="left:478px;top:267px">防禦規則</div><div class="a" style="left:537px;top:266px;width:1px;height:17px;background:#b0b0a0"></div>
<div class="t" style="left:548px;top:267px">建設規則</div><div class="a" style="left:607px;top:266px;width:1px;height:17px;background:#b0b0a0"></div>
<div class="t" style="left:618px;top:267px">修正參數</div><div class="a" style="left:677px;top:266px;width:1px;height:17px;background:#b0b0a0"></div>
<div class="rd" style="left:414px;top:296px"><div class="a" style="left:3px;top:3px;width:5px;height:5px;border-radius:50%;background:#222"></div></div>
<div class="t" style="left:430px;top:294px">等於</div><div class="in" style="left:460px;top:293px;width:21px">100</div><div class="t" style="left:489px;top:294px;font-size:10px">%</div><div class="t" style="left:500px;top:294px">統率</div><div class="t" style="left:532px;top:294px">+</div><div class="in" style="left:544px;top:293px;width:21px">100</div><div class="t" style="left:573px;top:294px;font-size:10px">%</div><div class="t" style="left:585px;top:294px">武力</div>
<div class="rd" style="left:414px;top:320px"></div>
<div class="t" style="left:430px;top:318px">當兵力小於</div><div class="in" style="left:496px;top:317px;width:36px">5000</div><div class="t" style="left:540px;top:318px">時按兵力動態調整統率和武力的權重</div>
<div class="hr" style="left:407px;top:340px;width:337px"></div>
<div class="cb on" style="left:413px;top:352px"></div><div class="t" style="left:430px;top:350px">氣力低於</div><div class="in" style="left:483px;top:349px;width:22px">100</div><div class="t" style="left:514px;top:350px">時部隊攻擊會衰減，最低衰減比例</div><div class="in" style="left:700px;top:349px;width:21px">50</div><div class="t" style="left:731px;top:350px;font-size:10px">%</div>

<div class="gb" style="left:397px;top:391px;width:358px;height:65px"><div class="gt">部隊耗糧規則</div></div>
<div class="cb on" style="left:413px;top:408px"></div><div class="t" style="left:430px;top:406px">城中士兵耗糧基數</div><div class="in" style="left:532px;top:405px;width:27px">250</div>
<div class="cb on" style="left:585px;top:408px"></div><div class="t" style="left:602px;top:406px">野外士兵耗糧基數</div><div class="in" style="left:703px;top:405px;width:28px">500</div>
<div class="cb on" style="left:413px;top:432px"></div><div class="t" style="left:430px;top:430px">馬匹也消耗等量糧草</div>
<div class="cb on" style="left:585px;top:432px"></div><div class="t" style="left:602px;top:430px">運輸隊耗糧等同一般部隊</div>

<div class="gb" style="left:397px;top:471px;width:358px;height:48px"><div class="gt">部隊氣力規則</div></div>
<div class="cb on" style="left:413px;top:487px"></div><div class="t" style="left:430px;top:485px">訓練氣力上限：</div><div class="t" style="left:517px;top:485px">無熟練兵</div><div class="in" style="left:571px;top:484px;width:23px">100</div><div class="t" style="left:607px;top:485px">有熟練兵</div><div class="in" style="left:663px;top:484px;width:22px">200</div>
</div>
</body></html>
